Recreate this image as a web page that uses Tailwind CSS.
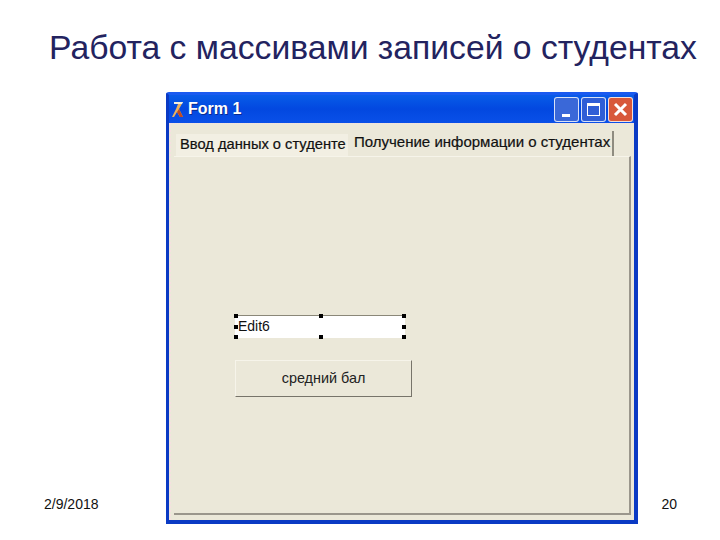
<!DOCTYPE html>
<html lang="ru">
<head>
  <meta charset="UTF-8" />
  <title>Работа с массивами записей о студентах</title>
  <script src="https://cdn.jsdelivr.net/npm/@tailwindcss/browser@4"></script>
</head>
<body class="bg-white">
  <div class="w-[720px] h-[540px] overflow-hidden flex flex-col font-['Liberation_Sans',Arial,sans-serif] text-[#111]">
    <!-- Title -->
    <h1 class="h-[92px] pt-[29px] pl-[26px] text-center text-[33.7px] leading-[36px] font-normal whitespace-nowrap text-[#23235f]">Работа с массивами записей о студентах</h1>

    <div class="flex items-start">
      <!-- Date -->
      <div class="w-[166px] h-[432px] flex items-end pl-[44px] pb-[12px] text-[14px] leading-[16px]">2/9/2018</div>

      <!-- Form window -->
      <div class="w-[472px] h-[432px] flex flex-col bg-[#0a3fd0] border-[3px] border-r-[4px] border-b-[4px] border-[#0a3ac4] border-t-[#1a5af0] rounded-t-[3px]">
        <!-- Title bar -->
        <div class="h-[28px] shrink-0 flex items-center pl-[3px] pr-[1px] bg-gradient-to-b from-[#0a5ce8] via-[#0348e0] to-[#0a50e8]">
          <svg width="13" height="17" viewBox="0 0 13 17" class="mr-[3px]">
            <path d="M2 1h9L7 8l4 8H8L5 11l-3 5H0l4-8 2-5H2z" fill="#e8b060"/>
            <path d="M7 8l4 8H8L5 11z" fill="#c04a20"/>
            <path d="M2 1h9l-1 2H2z" fill="#f4f0e0"/>
          </svg>
          <span class="text-white font-bold text-[16px] [text-shadow:1px_1px_0_#0a2a90]">Form 1</span>
          <div class="ml-auto flex gap-[2px]">
            <!-- Minimize -->
            <div class="w-[25px] h-[25px] flex items-end pl-[7px] pb-[4px] rounded-[3px] border border-white/80 bg-[#3a68d8]">
              <div class="w-[8px] h-[3px] bg-white"></div>
            </div>
            <!-- Maximize -->
            <div class="w-[25px] h-[25px] flex items-center justify-center rounded-[3px] border border-white/80 bg-[#2f5ed6]">
              <div class="w-[13px] h-[13px] border border-white border-t-[3px]"></div>
            </div>
            <!-- Close -->
            <div class="w-[25px] h-[25px] flex items-center justify-center rounded-[3px] border border-white/80 bg-[#d8583a]">
              <svg width="15" height="15" viewBox="0 0 15 15"><path d="M2 2l11 11M13 2L2 13" stroke="#fff" stroke-width="3"/></svg>
            </div>
          </div>
        </div>

        <!-- Client area -->
        <div class="flex-1 flex flex-col bg-[#ebe8d9] border-t border-l-2 border-dotted border-[#f6dfe0] pl-[3px] pr-[3px] pb-[5px] pt-[7px]">
          <!-- Tabs -->
          <div class="flex items-end h-[25px] shrink-0 pl-[2px]">
            <div class="w-[172px] h-[22px] pl-[4px] flex items-center bg-[#f2efe3] text-[14.7px] leading-[18px] pb-[2px] whitespace-nowrap [-webkit-text-stroke:0.2px_#111]">Ввод данных о студенте</div>
            <div class="w-[266px] h-[25px] pl-[6px] pt-[2px] flex items-start bg-[#ebe8d9] border-r-2 border-[#8f8c80] text-[15px] leading-[18px] whitespace-nowrap [-webkit-text-stroke:0.2px_#111]">Получение информации о студентах</div>
          </div>
          <!-- Page -->
          <div class="flex-1 flex flex-col pl-[61px] pt-[158px] border-r-2 border-b-2 border-[#9a968c] border-t border-t-[#f6f4ea]">
            <!-- Edit with selection handles -->
            <div class="relative w-[170px] h-[23px] pl-[3px] pb-[2px] flex items-center bg-white border-t border-[#8a8778] text-[14px] leading-none">
              Edit6
              <span class="absolute -left-[1px] -top-[2px] w-[4px] h-[4px] bg-black"></span>
              <span class="absolute left-[84px] -top-[2px] w-[4px] h-[4px] bg-black"></span>
              <span class="absolute -right-[1px] -top-[2px] w-[4px] h-[4px] bg-black"></span>
              <span class="absolute -left-[1px] top-[9px] w-[4px] h-[4px] bg-black"></span>
              <span class="absolute -right-[1px] top-[9px] w-[4px] h-[4px] bg-black"></span>
              <span class="absolute -left-[1px] -bottom-[1px] w-[4px] h-[4px] bg-black"></span>
              <span class="absolute left-[84px] -bottom-[1px] w-[4px] h-[4px] bg-black"></span>
              <span class="absolute -right-[1px] -bottom-[1px] w-[4px] h-[4px] bg-black"></span>
            </div>
            <!-- Button -->
            <div class="w-[177px] h-[37px] mt-[22px] flex items-center justify-center border border-[#f6f4ea] border-r-[#77746a] border-b-[#77746a] text-[14.4px] text-[#222]">средний бал</div>
          </div>
        </div>
      </div>

      <!-- Slide number -->
      <div class="w-[82px] h-[432px] flex items-end justify-end pr-[43px] pb-[12px] text-[14px] leading-[16px]">20</div>
    </div>
  </div>
</body>
</html>
